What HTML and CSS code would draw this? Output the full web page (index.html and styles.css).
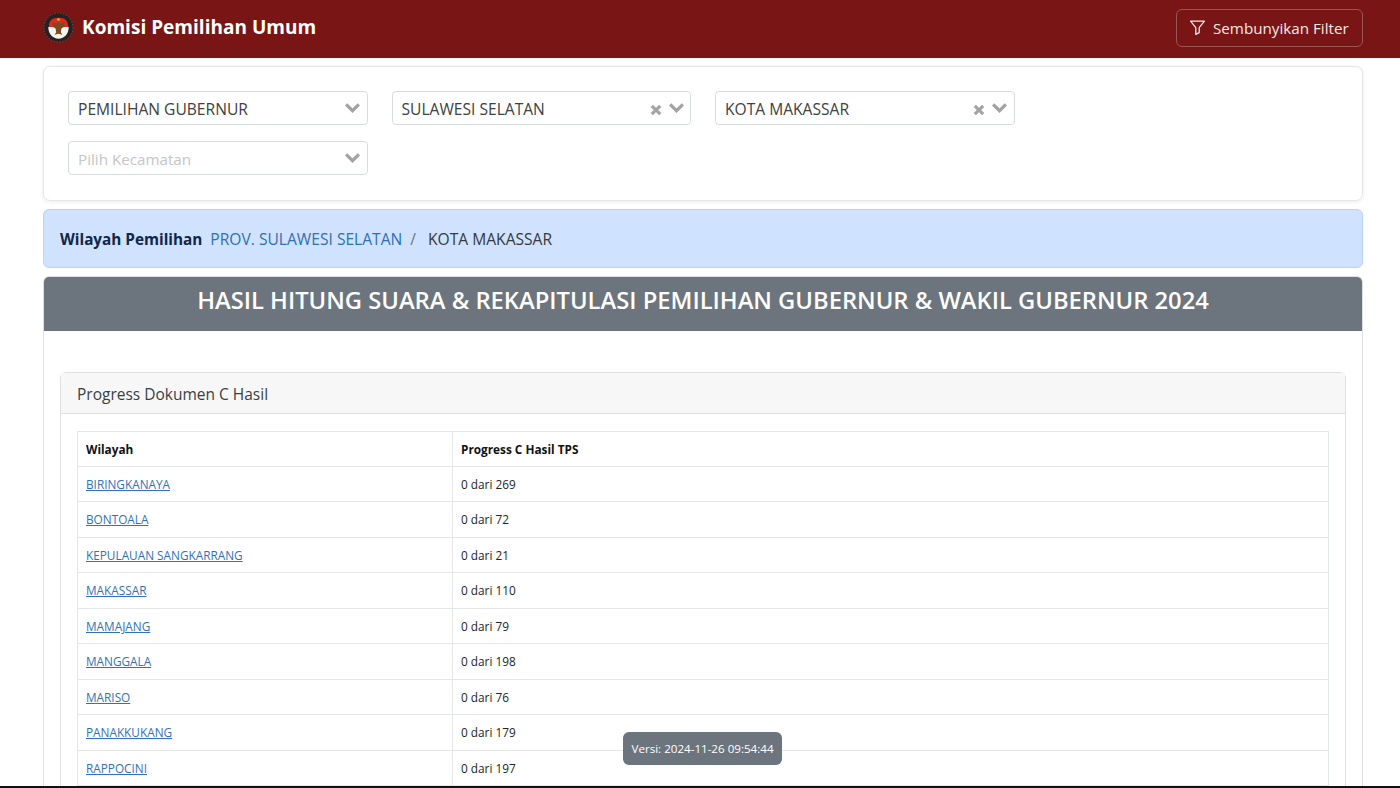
FILE: index.html
```html
<!DOCTYPE html>
<html lang="id">
<head>
<meta charset="utf-8">
<title>Komisi Pemilihan Umum</title>
<link rel="stylesheet" href="styles.css">
</head>
<body>
<div class="page">
  <header class="navbar">
    <div class="brand">
      <svg class="logo" viewBox="0 0 32 32" aria-hidden="true">
        <circle cx="16" cy="16" r="15.5" fill="#2b2020"/>
        <circle cx="16" cy="16" r="15" fill="none" stroke="#8d7f78" stroke-width=".6" stroke-dasharray="1.5 1.5"/>
        <path d="M6 16 C6 9 9 6 16 6 C23 6 26 9 26 16 Z" fill="#dc2a1c"/>
        <path d="M5.5 15.5 H26.5 C26.5 23 22 27.5 16 27.5 C10 27.5 5.5 23 5.5 15.5 Z" fill="#f6f2ec"/>
        <path d="M16 8.5 L17.6 12 L22.5 10.5 L21.5 15.5 L19 17 L18.4 21 L20 23.5 L16 22.5 L12 23.5 L13.6 21 L13 17 L10.5 15.5 L9.5 10.5 L14.4 12 Z" fill="#7a4a22"/>
        <circle cx="16" cy="7.8" r="1.3" fill="#e7b54a"/>
      </svg>
      <span class="brand-name">Komisi Pemilihan Umum</span>
    </div>
    <button class="filter-btn" type="button">
      <svg class="filter-icon" viewBox="0 0 16 16" aria-hidden="true">
        <path d="M1.5 2h13L9.6 8.2v4.6l-3.2 1.7V8.2Z" fill="none" stroke="currentColor" stroke-width="1.2" stroke-linejoin="round"/>
      </svg>
      <span>Sembunyikan Filter</span>
    </button>
  </header>

  <main class="content">
    <section class="filter-card">
      <div class="select">
        <span class="select-value">PEMILIHAN GUBERNUR</span>
        <svg class="chevron" viewBox="0 0 16 10" aria-hidden="true"><path d="M2 2l6 6 6-6" /></svg>
      </div>
      <div class="select">
        <span class="select-value">SULAWESI SELATAN</span>
        <svg class="clear" viewBox="0 0 10 10" aria-hidden="true"><path d="M1.5 1.5l7 7M8.5 1.5l-7 7" /></svg>
        <svg class="chevron" viewBox="0 0 16 10" aria-hidden="true"><path d="M2 2l6 6 6-6" /></svg>
      </div>
      <div class="select">
        <span class="select-value">KOTA MAKASSAR</span>
        <svg class="clear" viewBox="0 0 10 10" aria-hidden="true"><path d="M1.5 1.5l7 7M8.5 1.5l-7 7" /></svg>
        <svg class="chevron" viewBox="0 0 16 10" aria-hidden="true"><path d="M2 2l6 6 6-6" /></svg>
      </div>
      <div class="select">
        <span class="select-value placeholder">Pilih Kecamatan</span>
        <svg class="chevron" viewBox="0 0 16 10" aria-hidden="true"><path d="M2 2l6 6 6-6" /></svg>
      </div>
    </section>

    <nav class="region-alert">
      <strong class="region-label">Wilayah Pemilihan</strong>
      <a class="region-link" href="#">PROV. SULAWESI SELATAN</a>
      <span class="region-sep">/</span>
      <span class="region-current">KOTA MAKASSAR</span>
    </nav>

    <section class="result-card">
      <h1 class="result-title">HASIL HITUNG SUARA &amp; REKAPITULASI PEMILIHAN GUBERNUR &amp; WAKIL GUBERNUR 2024</h1>
      <div class="result-body">
        <div class="progress-card">
          <div class="progress-header">Progress Dokumen C Hasil</div>
          <div class="progress-body">
            <table class="progress-table">
              <thead>
                <tr class="head-row"><th class="col-region">Wilayah</th><th>Progress C Hasil TPS</th></tr>
              </thead>
              <tbody>
                <tr><td><a href="#">BIRINGKANAYA</a></td><td>0 dari 269</td></tr>
                <tr><td><a href="#">BONTOALA</a></td><td>0 dari 72</td></tr>
                <tr><td><a href="#">KEPULAUAN SANGKARRANG</a></td><td>0 dari 21</td></tr>
                <tr><td><a href="#">MAKASSAR</a></td><td>0 dari 110</td></tr>
                <tr><td><a href="#">MAMAJANG</a></td><td>0 dari 79</td></tr>
                <tr><td><a href="#">MANGGALA</a></td><td>0 dari 198</td></tr>
                <tr><td><a href="#">MARISO</a></td><td>0 dari 76</td></tr>
                <tr><td><a href="#">PANAKKUKANG</a></td><td>0 dari 179</td></tr>
                <tr><td><a href="#">RAPPOCINI</a></td><td>0 dari 197</td></tr>
              </tbody>
            </table>
          </div>
        </div>
      </div>
    </section>
  </main>
  <div class="version-badge">Versi: 2024-11-26 09:54:44</div>
  <div class="edge"></div>
</div>
</body>
</html>
```
FILE: styles.css
```css
* { box-sizing: border-box; }
html, body { margin: 0; height: 100%; overflow: hidden; background: #fff; }
body { font-family: "Open Sans", "Noto Sans", "Liberation Sans", sans-serif; color: #212529; }
.page { position: relative; height: 788px; display: flex; flex-direction: column; overflow: hidden; }

.navbar { flex: none; height: 58px; background: #7a1515; display: flex; align-items: center; justify-content: space-between; padding: 0 37px 3px 43px; }
.brand { display: flex; align-items: center; gap: 8px; }
.logo { width: 31px; height: 31px; display: block; }
.brand-name { color: #fff; font-size: 19.05px; font-weight: 700; line-height: 24px; margin-top: -2px; white-space: nowrap; }
.filter-btn { display: flex; align-items: center; gap: 7px; width: 187px; height: 38px; padding: 0 12px; background: transparent; border: 1px solid #9a5555; border-radius: 6px; color: #f6e6e6; font: inherit; font-size: 15.2px; white-space: nowrap; }
.filter-icon { width: 17px; height: 17px; flex: none; }

.content { flex: 1; min-height: 0; overflow: hidden; padding: 8px 37px 0 43px; display: flex; flex-direction: column; gap: 8px; }

.filter-card { flex: none; height: 135px; padding: 24px 300px 24px 24px; border: 1px solid #e6e6e6; border-radius: 7px; box-shadow: 0 1px 4px rgba(0,0,0,.08); display: flex; flex-wrap: wrap; column-gap: 24px; row-gap: 16px; align-content: flex-start; }
.select { width: 299.5px; height: 34px; padding: 1px 5.5px 0 9px; border: 1px solid #d8dbde; border-radius: 4px; display: flex; align-items: center; gap: 6px; }
.select-value { flex: 1; font-size: 15.6px; color: #3c4144; white-space: nowrap; }
.placeholder { color: #c4c6c8; font-size: 15.2px; }
.chevron { width: 17px; height: 11px; flex: none; fill: none; stroke: #a3a3a3; stroke-width: 3; margin-top: -3px; }
.clear { width: 12px; height: 12px; flex: none; fill: none; stroke: #a3a3a3; stroke-width: 2.6; margin-top: 2px; }

.region-alert { flex: none; height: 59px; padding: 1px 16px 0; background: #cfe2ff; border: 1px solid #b6d4fe; border-radius: 6px; display: flex; align-items: center; font-size: 15.6px; white-space: nowrap; }
.region-label { color: #0f2748; font-weight: 700; font-size: 15.3px; margin-right: 8px; }
.region-link { color: #2f6fb3; text-decoration: none; }
.region-sep { color: #6c757d; margin: 0 12px 0 8px; }
.region-current { color: #343a40; }

.result-card { flex: 1; min-height: 0; border: 1px solid #dfdfdf; border-bottom: 0; border-radius: 6px 6px 0 0; overflow: hidden; display: flex; flex-direction: column; }
.result-title { flex: none; margin: 0; height: 54px; background: #6c757d; color: #fff; font-size: 23.76px; font-weight: 600; line-height: 47px; text-align: center; white-space: nowrap; }
.result-body { flex: 1; min-height: 0; padding: 41px 16px 0; overflow: hidden; }
.progress-card { border: 1px solid #dfdfdf; border-radius: 6px 6px 0 0; border-bottom: 0; }
.progress-header { height: 41px; padding: 1px 16px 0; display: flex; align-items: center; background: #f7f7f7; border-bottom: 1px solid #dfdfdf; font-size: 15.5px; color: #3a3f44; }
.progress-body { padding: 17px 16px 0; }
.progress-table { width: 100%; border-collapse: collapse; table-layout: fixed; font-size: 11.8px; color: #212529; }
.progress-table tr { height: 35.5px; }
.progress-table .head-row { height: 34.5px; }
.progress-table th, .progress-table td { border: 1px solid #e4e6e8; padding: 0 8px; text-align: left; white-space: nowrap; }
.progress-table th { font-weight: 700; color: #111; }
.col-region { width: 375px; }
.progress-table a { color: #2f72b8; text-decoration: underline; }

.version-badge { position: absolute; left: 623px; top: 732px; width: 159px; height: 33px; border-radius: 6px; background: #6c757d; color: #fff; font-size: 11.6px; display: flex; align-items: center; justify-content: center; white-space: nowrap; }
.edge { position: absolute; left: 0; right: 0; bottom: 0; height: 2px; background: #111; }
```
